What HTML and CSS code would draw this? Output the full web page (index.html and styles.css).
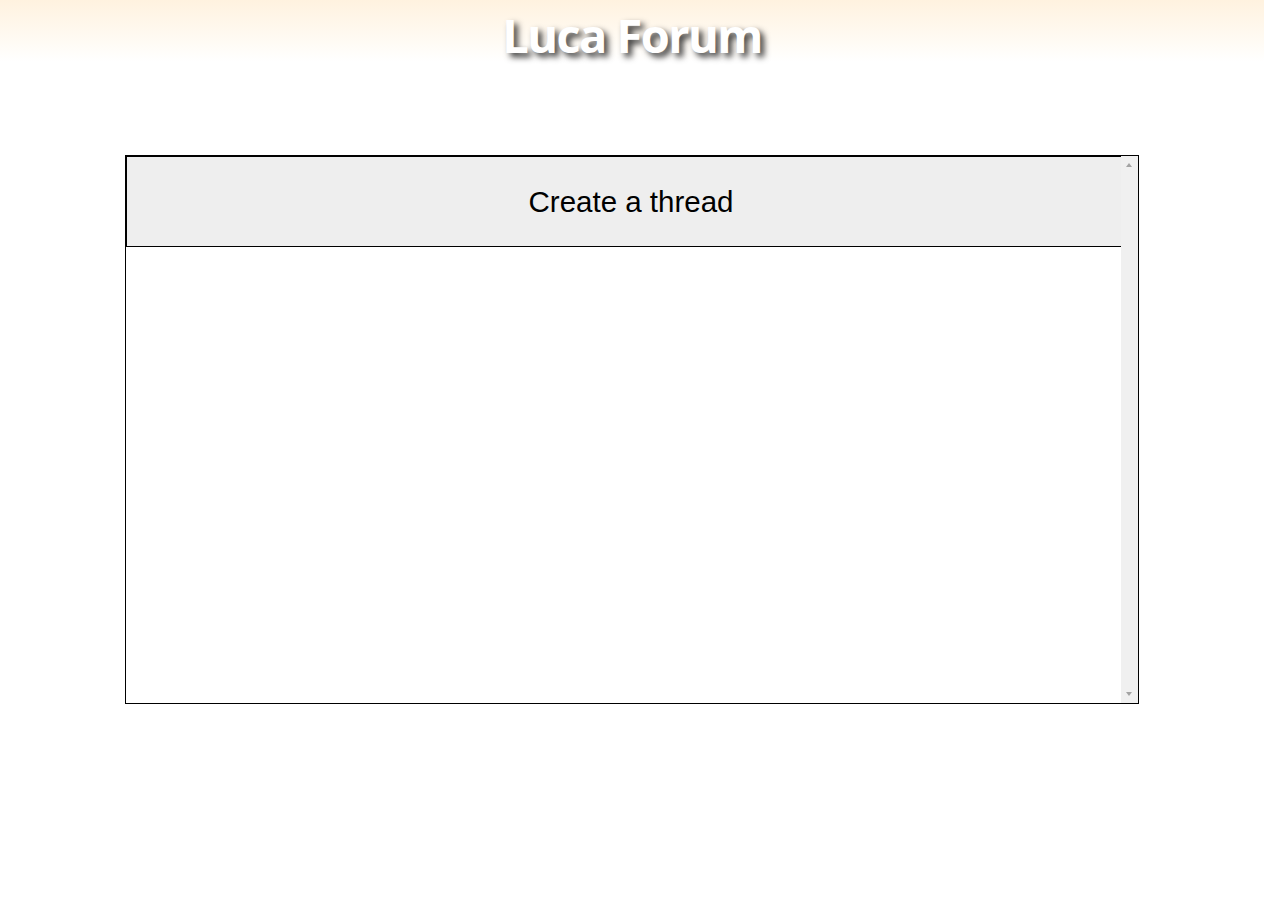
FILE: index.html
```html
<!DOCTYPE html>
<html lang="en">
<head>
<meta charset="utf-8">
<title>Luca Forum</title>
<link rel="stylesheet" href="styles.css">
</head>
<body>
<header class="site-header">
  <h1 class="site-title">Luca Forum</h1>
</header>
<main class="thread-panel">
  <div class="panel-scroll">
    <div class="panel-head">Create a thread</div>
  </div>
  <div class="scrollbar" aria-hidden="true">
    <span class="arrow arrow-up"></span>
    <span class="arrow arrow-down"></span>
  </div>
</main>
</body>
</html>
```
FILE: styles.css
```css
html, body {
  margin: 0;
  padding: 0;
  background: #ffffff;
}

.site-header {
  height: 62px;
  background: linear-gradient(to bottom, #fff2df 0%, #fffaf2 60%, #ffffff 100%);
  display: flex;
  justify-content: center;
  align-items: flex-start;
}

.site-title {
  margin: 0;
  padding-top: 5px;
  font-family: "Open Sans", "Noto Sans", sans-serif;
  font-weight: 700;
  font-size: 47px;
  line-height: 60px;
  letter-spacing: -1.6px;
  color: #ffffff;
  text-shadow: 4px 4px 6px #3a3a3a;
}

.thread-panel {
  width: 80%;
  height: 60vh;
  margin: 93px auto 0;
  border: 1px solid #000000;
  background: #ffffff;
  display: flex;
}

.panel-scroll {
  flex: 1;
  min-width: 0;
  overflow: hidden;
}

.panel-head {
  box-sizing: border-box;
  width: calc(100% + 15px);
  height: 91px;
  border: 1px solid #000000;
  background: #eeeeee;
  display: flex;
  align-items: center;
  justify-content: center;
  font-family: "Liberation Sans", Arial, sans-serif;
  font-size: 29.5px;
  color: #000000;
}

.scrollbar {
  width: 17px;
  flex: none;
  background: #f0f0f0;
  display: flex;
  flex-direction: column;
  justify-content: space-between;
  align-items: flex-start;
  padding: 7px 0;
  box-sizing: border-box;
}

.arrow {
  display: block;
  width: 0;
  height: 0;
  margin-left: 5px;
  border-left: 3.5px solid transparent;
  border-right: 3.5px solid transparent;
}

.arrow-up {
  border-bottom: 4px solid #a3a3a3;
}

.arrow-down {
  border-top: 4px solid #a3a3a3;
}
```
